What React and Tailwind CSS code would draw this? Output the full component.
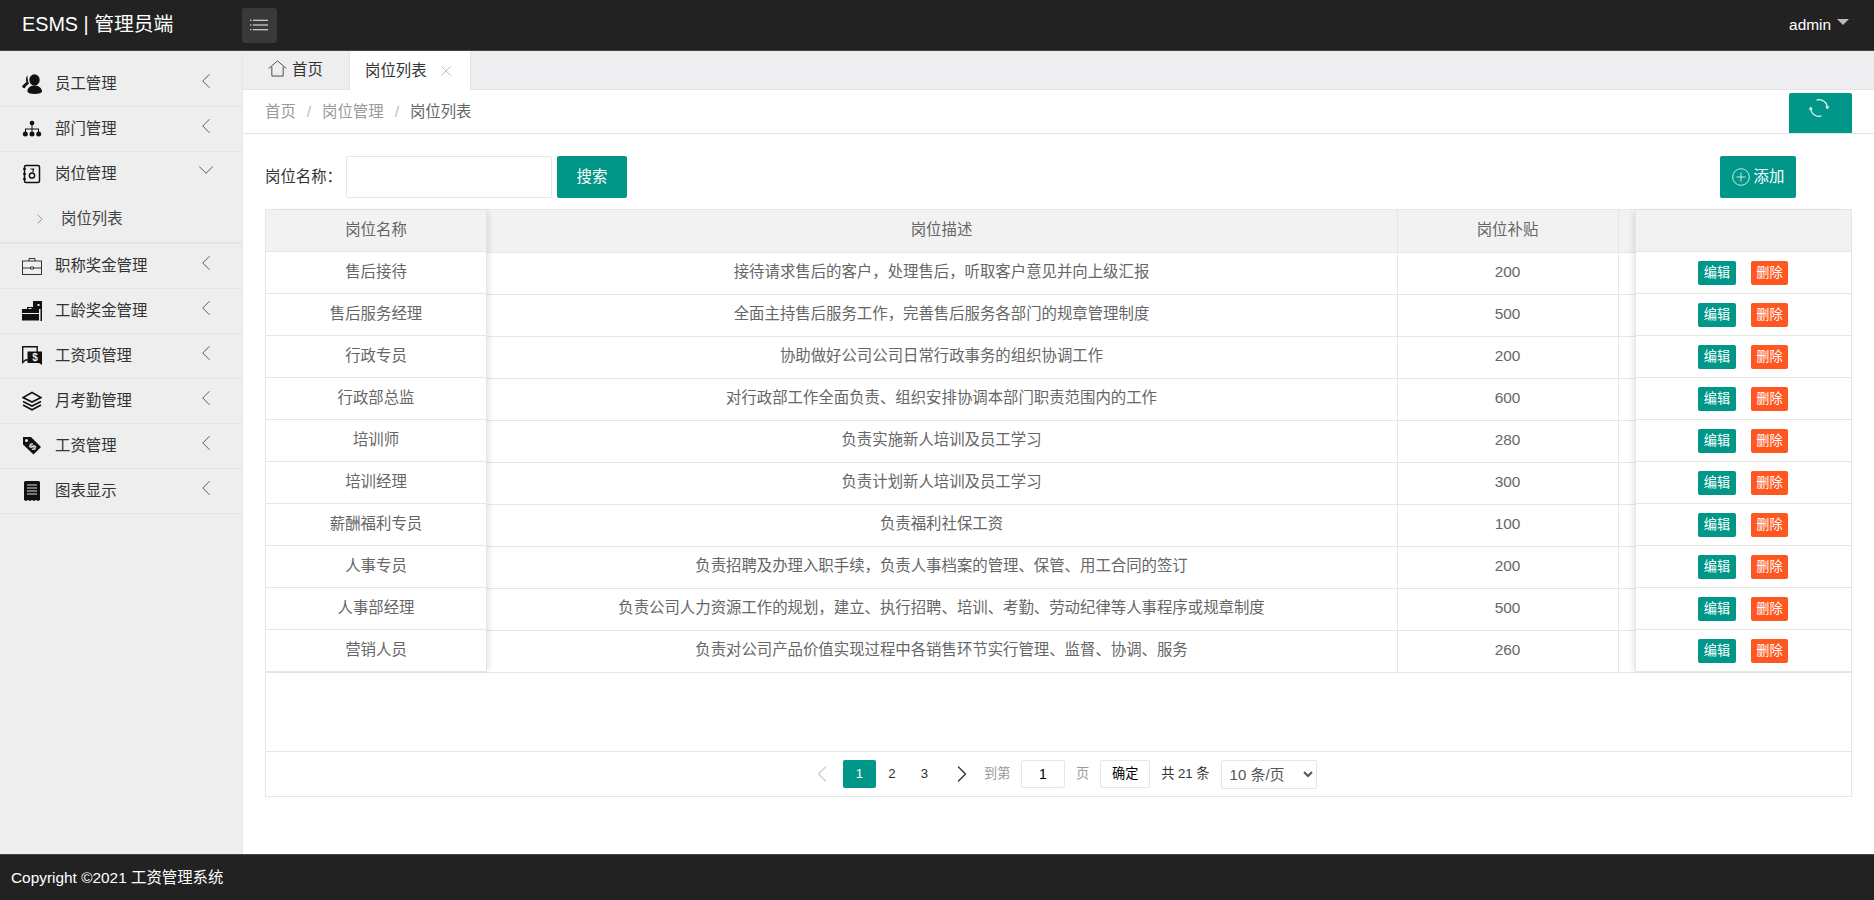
import React from 'react';
import { ChevronLeft, ChevronRight, ChevronDown, X } from 'lucide-react';

const FONT = "font-['Liberation_Sans','Noto_Sans_CJK_SC',sans-serif]";

const rows = [
  ['售后接待', '接待请求售后的客户，处理售后，听取客户意见并向上级汇报', '200'],
  ['售后服务经理', '全面主持售后服务工作，完善售后服务各部门的规章管理制度', '500'],
  ['行政专员', '协助做好公司公司日常行政事务的组织协调工作', '200'],
  ['行政部总监', '对行政部工作全面负责、组织安排协调本部门职责范围内的工作', '600'],
  ['培训师', '负责实施新人培训及员工学习', '280'],
  ['培训经理', '负责计划新人培训及员工学习', '300'],
  ['薪酬福利专员', '负责福利社保工资', '100'],
  ['人事专员', '负责招聘及办理入职手续，负责人事档案的管理、保管、用工合同的签订', '200'],
  ['人事部经理', '负责公司人力资源工作的规划，建立、执行招聘、培训、考勤、劳动纪律等人事程序或规章制度', '500'],
  ['营销人员', '负责对公司产品价值实现过程中各销售环节实行管理、监督、协调、服务', '260'],
];

const IconUsers = () => (
  <svg viewBox="0 0 20 20" className="w-5 h-5" fill="#111">
    <ellipse cx="12.500" cy="6" rx="5.200" ry="5.800" />
    <path d="M5.500 18c-.5-3.500 2-6.500 7-6.500s7.500 3 7.500 6.500c-1 1.200-4 2-7.500 2s-6-.8-7-2z" />
    <path d="M5.500 1.500C4 3 3.500 5.500 4.500 8 2.500 9.500.8 11 0 12.500c.5 1 1.500 1.500 2.800 1.700C3.500 12.500 5 11 7 9.800 5.800 7.500 5.500 4.500 5.500 1.500z" />
  </svg>
);
const IconOrg = () => (
  <svg viewBox="0 0 20 20" className="w-5 h-5" fill="#111">
    <circle cx="10" cy="4" r="2.300" />
    <path d="M9.500 6h1v3.500h6.500V13h-1v-2.500h-5.500V13h-1v-2.500H4V13H3V9.500h6.500z" />
    <circle cx="3.300" cy="15" r="2.500" />
    <circle cx="10" cy="15" r="2.500" />
    <circle cx="16.700" cy="15" r="2.500" />
  </svg>
);
const IconContact = () => (
  <svg viewBox="0 0 20 20" className="w-5 h-5" fill="none" stroke="#111">
    <rect x="2.500" y="1.500" width="15" height="17" rx="1.500" strokeWidth="1.500" />
    <path d="M1 5h3M1 10h3M1 15h3" strokeWidth="1.500" />
    <path d="M8.500 5h3l-.7 3" strokeWidth="1.200" />
    <circle cx="10" cy="11.500" r="2.600" strokeWidth="1.500" />
  </svg>
);
const IconCase = () => (
  <svg viewBox="0 0 20 20" className="w-5 h-5" fill="none" stroke="#222" strokeWidth="0.900">
    <rect x="0.500" y="5" width="19" height="13.500" />
    <path d="M7 5V2.500h6V5M0.500 12h8M11.500 12h8M8.500 11h3v2h-3z" />
  </svg>
);
const IconCaseBuilding = () => (
  <svg viewBox="0 0 20 20" className="w-5 h-5" fill="#111">
    <path d="M11 0h9v20h-1.500V8H11z" />
    <rect x="15.500" y="3" width="2" height="2" fill="#eee" />
    <path d="M5 6h6v2h6v4H0V8h5zM6.500 7v1h3V7zM0 13h17v6.500H0z" />
  </svg>
);
const IconChat = () => (
  <svg viewBox="0 0 20 20" className="w-5 h-5">
    <path d="M.7.700h14.500V14H3.500L.7 16.500z" fill="none" stroke="#111" strokeWidth="1.400" />
    <path d="M5.500 5.500H20v13.500l-3-2H5.500z" fill="#111" />
    <text x="13" y="15" fontSize="10" fontWeight="700" fill="#eee" textAnchor="middle" fontFamily="Liberation Sans">$</text>
  </svg>
);
const IconLayers = () => (
  <svg viewBox="0 0 20 20" className="w-5 h-5" fill="none" stroke="#111" strokeWidth="1.600">
    <path d="M10 1.500 19 6.500 10 11 1 6.500z" />
    <path d="M1 10.500 10 15l9-4.500M1 14l9 4.800L19 14" />
  </svg>
);
const IconTag = () => (
  <svg viewBox="0 0 20 20" className="w-5 h-5">
    <path d="M1 1h8l10 10-7.500 7.500L1 8.500z" fill="#111" />
    <circle cx="4.500" cy="4.500" r="1.500" fill="#eee" />
    <text x="10.500" y="14" fontSize="10" fontWeight="700" fill="#eee" textAnchor="middle" fontFamily="Liberation Sans" transform="rotate(-45 10.500 10.500)">$</text>
  </svg>
);
const IconReceipt = () => (
  <svg viewBox="0 0 20 20" className="w-5 h-5">
    <path d="M2 1.500A1.500 1.500 0 0 1 3.500 0h13A1.500 1.500 0 0 1 18 1.500V19l-2 1-2-1-2 1-2-1-2 1-2-1-2 1-2-1z" fill="#111" />
    <path d="M5 4h10M5 7h10M5 10h10M5 13h10" stroke="#ddd" strokeWidth="1" />
  </svg>
);

const menus = [
  ['员工管理', <IconUsers />],
  ['部门管理', <IconOrg />],
  ['岗位管理', <IconContact />, true],
  ['职称奖金管理', <IconCase />],
  ['工龄奖金管理', <IconCaseBuilding />],
  ['工资项管理', <IconChat />],
  ['月考勤管理', <IconLayers />],
  ['工资管理', <IconTag />],
  ['图表显示', <IconReceipt />],
];

function MenuItem({ label, icon, open }) {
  return (
    <div className={open ? 'border-b-2 border-[#e4e4e4]' : 'border-b border-[#e4e4e4]'}>
      <div className="h-[44px] flex items-center pl-[22px] pr-[23px] text-[15.4px] text-[#333]">
        <span className="w-5 h-5 flex items-center justify-center">{icon}</span>
        <span className="ml-[13px] flex-1 leading-none">{label}</span>
        {open ? (
          <ChevronDown className="w-[26px] h-[26px] -mt-[9px] text-[#555]" strokeWidth={0.900} />
        ) : (
          <ChevronLeft className="w-[26px] h-[26px] -mt-[7px] text-[#555]" strokeWidth={0.900} />
        )}
      </div>
      {open && (
        <div className="h-[46px] flex items-center pl-[32px] text-[15.4px] text-[#444]">
          <ChevronRight className="w-[16px] h-[16px] text-[#777]" strokeWidth={1.100} />
          <span className="ml-[13px]">岗位列表</span>
        </div>
      )}
    </div>
  );
}

function Hamburger() {
  return (
    <svg viewBox="0 0 20 12" className="w-[19px] h-[12px]" fill="none" stroke="#fff" strokeWidth="1">
      <path d="M0 1h1.500M3 1h16M0 6h1.500M3 6h16M0 11h1.500M3 11h16" />
    </svg>
  );
}

function PlusCircle() {
  return (
    <svg viewBox="0 0 18 18" className="w-[18px] h-[18px]" fill="none" stroke="#dff3ef" strokeWidth="0.900">
      <circle cx="9" cy="9" r="8.300" />
      <path d="M9 4.500v9M4.500 9h9" />
    </svg>
  );
}

function Refresh() {
  return (
    <svg viewBox="0 0 20 20" className="w-[20px] h-[20px]" fill="none" stroke="#e6f5f2" strokeWidth="1.200">
      <path d="M7.500 2.100A8.300 8.300 0 0 1 18.300 10" />
      <path d="M12.500 17.900A8.300 8.300 0 0 1 1.700 10" />
      <path d="M16.800 8.300 18.300 10.500 19.700 8.300M3.200 11.700 1.700 9.500 .3 11.700" />
    </svg>
  );
}

export default function App() {
  return (
    <div className={`${FONT} h-[900px] flex flex-col overflow-hidden bg-white text-[15.4px]`}>
      <header className="h-[51px] shrink-0 bg-[#222222] border-b border-[#444] flex items-center text-white">
        <div className="w-[242px] pl-[22px] text-[19.8px]">ESMS | 管理员端</div>
        <button className="w-[35px] h-[35px] rounded-[3px] bg-[#393939] flex items-center justify-center">
          <Hamburger />
        </button>
        <div className="ml-auto flex items-center pr-[25px] text-[15.4px]">
          admin
          <span className="ml-[6px] -mt-[6px] w-0 h-0 border-x-[6.5px] border-x-transparent border-t-[6px] border-t-[#bbb]" />
        </div>
      </header>

      <div className="flex-1 flex min-h-0">
        <aside className="w-[243px] shrink-0 bg-[#eeeeee] border-r border-[#e6e6e6] pt-[11px]">
          {menus.map(([label, icon, open]) => (
            <MenuItem key={label} label={label} icon={icon} open={open} />
          ))}
        </aside>

        <main className="flex-1 min-w-0 flex flex-col">
          <div className="h-[39px] shrink-0 bg-[#eeeef0] border-b border-[#e4e4e4] flex items-end text-[#333]">
            <div className="h-[38px] w-[106px] flex items-center pl-[25px]">
              <svg viewBox="0 0 20 18" className="w-[19px] h-[17px] -mt-[3px]" fill="none" stroke="#444" strokeWidth="1">
                <path d="M.7 9 10 1l9.300 8M4 7v10h12V7" />
              </svg>
              <span className="ml-[5px]">首页</span>
            </div>
            <div className="h-[39px] w-[122px] -mb-px bg-white border-x border-[#e4e4e4] flex items-center pl-[15px]">
              岗位列表
              <X className="ml-[10px] w-[18px] h-[18px] text-[#aaa]" strokeWidth={1} />
            </div>
          </div>

          <div className="h-[44px] shrink-0 border-b border-[#e4e4e4] flex items-center pl-[22px] pr-[22px] text-[#999]">
            <span>首页</span>
            <span className="mx-[11px] text-[#bbb]">/</span>
            <span>岗位管理</span>
            <span className="mx-[11px] text-[#bbb]">/</span>
            <span className="text-[#666]">岗位列表</span>
            <button className="ml-auto self-start mt-[3px] w-[63px] h-[40px] bg-[#009688] rounded-t-[2px] flex justify-center pt-[5px] pr-[3px]">
              <Refresh />
            </button>
          </div>

          <div className="flex-1 min-h-0 px-[22px] pt-[22px]">
            <div className="flex items-center h-[42px]">
              <span className="text-[#333] w-[81px]">岗位名称：</span>
              <input className="w-[206px] h-[42px] border border-[#e6e6e6] rounded-[2px] outline-none" />
              <button className="ml-[5px] w-[70px] h-[42px] bg-[#009688] rounded-[2px] text-white">搜索</button>
              <button className="ml-auto mr-[56px] w-[76px] h-[42px] bg-[#009688] rounded-[2px] text-white flex items-center justify-center gap-[4px]">
                <PlusCircle />
                添加
              </button>
            </div>

            <div className="mt-[11px] border border-[#e6e6e6] h-[588px] flex flex-col">
              <div className="flex-1 min-h-0 relative">
                <table className="w-full table-fixed border-collapse text-[#666]">
                  <colgroup>
                    <col className="w-[220px]" />
                    <col className="w-[911px]" />
                    <col className="w-[221px]" />
                    <col />
                  </colgroup>
                  <thead>
                    <tr className="h-[42px] bg-[#f2f2f2]">
                      <th className="border-r border-b border-[#e6e6e6]" />
                      <th className="pb-[2px] font-normal border-r border-b border-[#e6e6e6]">岗位描述</th>
                      <th className="pb-[2px] font-normal border-r border-b border-[#e6e6e6]">岗位补贴</th>
                      <th className="border-b border-[#e6e6e6]" />
                    </tr>
                  </thead>
                  <tbody>
                    {rows.map((r) => (
                      <tr key={r[0]} className="h-[42px]">
                        <td className="border-r border-b border-[#e6e6e6]" />
                        <td className="pb-[2px] text-center border-r border-b border-[#e6e6e6]">{r[1]}</td>
                        <td className="pb-[2px] text-center border-r border-b border-[#e6e6e6]">{r[2]}</td>
                        <td className="border-b border-[#e6e6e6]" />
                      </tr>
                    ))}
                  </tbody>
                </table>

                {/* fixed columns sit over the table */}
                <div className="absolute top-0 left-0 w-[221px] bg-white text-[#666] border-r border-[#e6e6e6] shadow-[4px_0_6px_-2px_rgba(0,0,0,0.1)]">
                  <div className="h-[42px] pb-[2px] bg-[#f2f2f2] border-b border-[#e6e6e6] flex items-center justify-center">岗位名称</div>
                  {rows.map((r) => (
                    <div key={r[0]} className="h-[42px] pb-[2px] border-b border-[#e6e6e6] flex items-center justify-center">{r[0]}</div>
                  ))}
                </div>
                <div className="absolute top-0 right-0 w-[216px] bg-white border-l border-[#e6e6e6] shadow-[-4px_0_6px_-2px_rgba(0,0,0,0.1)]">
                  <div className="h-[42px] bg-[#f2f2f2] border-b border-[#e6e6e6]" />
                  {rows.map((r) => (
                    <div key={r[0]} className="h-[42px] pr-[1px] border-b border-[#e6e6e6] flex items-center justify-center gap-[15px] text-[13.2px] text-white">
                      <span className="w-[38px] h-[24px] rounded-[2px] bg-[#009688] flex items-center justify-center">编辑</span>
                      <span className="w-[37px] h-[24px] rounded-[2px] bg-[#ff5722] flex items-center justify-center">删除</span>
                    </div>
                  ))}
                </div>
              </div>

              <div className="h-[45px] shrink-0 border-t border-[#e6e6e6] flex items-center pl-[542px] text-[13.2px] text-[#333]">
                <ChevronLeft className="w-[28px] h-[28px] text-[#d2d2d2]" strokeWidth={1.200} />
                <span className="ml-[7px] w-[33px] h-[28px] rounded-[2px] bg-[#009688] text-white flex items-center justify-center">1</span>
                <span className="w-[32px] text-center">2</span>
                <span className="w-[33px] text-center">3</span>
                <ChevronRight className="ml-[7px] w-[28px] h-[28px] text-[#333]" strokeWidth={1.200} />
                <span className="ml-[8px] w-[26px] whitespace-nowrap text-[#999]">到第</span>
                <span className="ml-[11px] w-[44px] h-[28px] border border-[#e6e6e6] rounded-[2px] flex items-center justify-center text-[14px] text-black">1</span>
                <span className="ml-[11px] text-[#999]">页</span>
                <span className="ml-[11px] w-[50px] h-[28px] border border-[#e6e6e6] rounded-[2px] flex items-center justify-center text-black">确定</span>
                <span className="ml-[11px] whitespace-nowrap">共 21 条</span>
                <select defaultValue="10" className="ml-[11px] w-[96px] h-[29px] border border-[#e6e6e6] rounded-[2px] text-[15px] text-[#555] pl-[4px] bg-white">
                  <option value="10">10 条/页</option>
                  <option value="20">20 条/页</option>
                </select>
              </div>
            </div>
          </div>
        </main>
      </div>

      <footer className="h-[46px] shrink-0 bg-[#222222] border-t border-[#444] flex items-center pl-[11px] text-white">
        Copyright ©2021 工资管理系统
      </footer>
    </div>
  );
}
